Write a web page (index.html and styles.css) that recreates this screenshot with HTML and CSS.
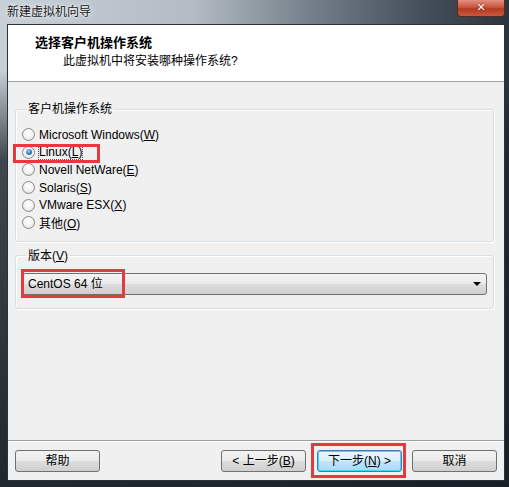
FILE: index.html
```html
<!DOCTYPE html>
<html lang="zh-CN">
<head>
<meta charset="utf-8">
<title>新建虚拟机向导</title>
<link rel="stylesheet" href="styles.css">
</head>
<body>
<div class="window">
  <div class="titlebar">
    <span class="title">新建虚拟机向导</span>
    <span class="close">✕</span>
  </div>
  <div class="client">
    <div class="header">
      <div class="h-title">选择客户机操作系统</div>
      <div class="h-sub">此虚拟机中将安装哪种操作系统?</div>
    </div>
    <div class="main">
      <fieldset class="group group-os">
        <legend>客户机操作系统</legend>
        <div class="radio"><span class="dot"></span><span>Microsoft Windows(<u>W</u>)</span></div>
        <div class="radio checked"><span class="dot"></span><span class="focus">Linux(<u>L</u>)</span></div>
        <div class="radio"><span class="dot"></span><span>Novell NetWare(<u>E</u>)</span></div>
        <div class="radio"><span class="dot"></span><span>Solaris(<u>S</u>)</span></div>
        <div class="radio"><span class="dot"></span><span>VMware ESX(<u>X</u>)</span></div>
        <div class="radio"><span class="dot"></span><span>其他(<u>O</u>)</span></div>
      </fieldset>
      <fieldset class="group group-ver">
        <legend>版本(<u>V</u>)</legend>
        <div class="combo">
          <span>CentOS 64 位</span>
          <span class="arrow"></span>
        </div>
      </fieldset>
    </div>
    <div class="footer">
      <button class="btn">帮助</button>
      <div class="spacer"></div>
      <button class="btn">&lt; 上一步(<u>B</u>)</button>
      <button class="btn default">下一步(<u>N</u>) &gt;</button>
      <button class="btn">取消</button>
    </div>
  </div>
  <div class="mark mark-linux"></div>
  <div class="mark mark-combo"></div>
  <div class="mark mark-next"></div>
</div>
</body>
</html>
```

FILE: styles.css
```css
* { box-sizing: border-box; }
html, body { margin: 0; padding: 0; }
body {
  width: 509px;
  height: 487px;
  overflow: hidden;
  font-family: "Liberation Sans", "Noto Sans CJK SC", sans-serif;
  font-size: 12px;
  color: #000;
}
.window {
  position: relative;
  width: 509px;
  height: 487px;
  display: flex;
  flex-direction: column;
  background:
    linear-gradient(180deg, rgba(28,36,44,0) 0, rgba(28,36,44,0) 70px, rgba(28,36,44,0.8) 160px, rgba(22,30,38,0.95) 100%),
    linear-gradient(90deg, #c7cfd7 0%, #b3bcc5 38%, #737d87 62%, #46515c 82%, #2b3540 100%);
}
.titlebar {
  height: 24px;
  display: flex;
  align-items: flex-start;
  justify-content: space-between;
  padding: 0 4px 0 7px;
}
.title {
  margin-top: 4px;
  line-height: 16px;
  color: #202020;
  text-shadow: 0 0 6px rgba(255,255,255,0.9), 0 0 2px rgba(255,255,255,0.8);
}
.close {
  width: 48px;
  height: 17px;
  margin-left: auto;
  border: 1px solid #5a2a22;
  border-top: none;
  border-radius: 0 0 4px 4px;
  background: linear-gradient(180deg, #e2907e 0%, #c8553f 45%, #b53a22 55%, #c9583e 100%);
  color: #fff;
  font-family: "DejaVu Sans", sans-serif;
  font-size: 11px;
  font-weight: bold;
  line-height: 15px;
  text-align: center;
  text-shadow: 0 0 2px #5a1a10;
}
.client {
  margin: 0 4px 6px 7px;
  flex: 1;
  display: flex;
  flex-direction: column;
  background: #f0f0f0;
  border: 1px solid #2c3238;
}
.header {
  height: 57px;
  background: #fff;
  border-bottom: 1px solid #a0a0a0;
  padding: 9px 0 0 27px;
}
.h-title {
  font-family: "Noto Sans CJK SC", sans-serif;
  font-weight: bold;
  font-size: 13px;
  line-height: 16px;
}
.h-sub {
  margin: 3px 0 0 28px;
  line-height: 16px;
}
.main {
  flex: 1;
  display: flex;
  flex-direction: column;
  padding: 19px 10px 0 7px;
}
.group {
  margin: 0;
  border: 1px solid #d5dfe5;
  box-shadow: inset 1px 1px 0 #fff, 1px 1px 0 #fff;
  border-radius: 3px;
  min-width: 0;
}
.group legend {
  padding: 0 2px;
  margin-left: 4px;
  line-height: 16px;
}
.group-os {
  padding: 9px 6px 9px 6px;
}
.radio {
  display: flex;
  align-items: center;
  height: 17.6px;
}
.radio .dot {
  width: 13px;
  height: 13px;
  border-radius: 50%;
  border: 1px solid #8a8a8a;
  background: radial-gradient(circle at 50% 40%, #ffffff 0%, #f4f4f4 45%, #d8d8d8 100%);
  margin-right: 4px;
  flex: none;
  position: relative;
}
.radio.checked .dot::after {
  content: "";
  position: absolute;
  left: 2.5px;
  top: 2.5px;
  width: 6px;
  height: 6px;
  border-radius: 50%;
  background: radial-gradient(circle at 40% 35%, #9fd0f5 0%, #2f7cc2 55%, #15467c 100%);
}
.radio .focus {
  outline: 1px dotted #555;
  outline-offset: 0;
}
.group-ver {
  margin-top: 6px;
  padding: 9px 6px 13px 6px;
}
.combo {
  height: 22px;
  border: 1px solid #707070;
  border-radius: 3px;
  background: linear-gradient(180deg, #f3f3f3 0%, #ebebeb 48%, #dddddd 52%, #cfcfcf 100%);
  display: flex;
  align-items: center;
  justify-content: space-between;
  padding: 0 5px 0 5px;
  line-height: 16px;
}
.combo .arrow {
  width: 0;
  height: 0;
  border-left: 4px solid transparent;
  border-right: 4px solid transparent;
  border-top: 4px solid #000;
  margin-top: 1px;
}
.footer {
  border-top: 1px solid #a0a0a0;
  box-shadow: inset 0 1px 0 #fff;
  padding: 9px 7px 8px 7px;
  display: flex;
  align-items: center;
}
.spacer { flex: 1; }
.btn {
  width: 85px;
  height: 22px;
  margin: 0;
  padding: 0;
  border: 1px solid #707070;
  border-radius: 3px;
  background: linear-gradient(180deg, #f2f2f2 0%, #ebebeb 48%, #dddddd 52%, #cfcfcf 100%);
  font-family: "Liberation Sans", "Noto Sans CJK SC", sans-serif;
  font-size: 12px;
  color: #000;
  line-height: 18px;
}
.btn + .btn { margin-left: 11px; }
.btn:last-child { margin-left: 10px; }
.btn.default {
  border-color: #3c7fb1;
  box-shadow: inset 0 0 0 1px #48d5f4;
  background: linear-gradient(180deg, #eaf6fd 0%, #d9f0fc 48%, #bee6fd 52%, #a7d9f5 100%);
}
.mark {
  position: absolute;
  border: 3px solid #e23a3f;
}
.mark-linux { left: 13px; top: 144px; width: 87px; height: 19px; }
.mark-combo { left: 21px; top: 269px; width: 104px; height: 29px; }
.mark-next { left: 311px; top: 443px; width: 95px; height: 35px; }
```
